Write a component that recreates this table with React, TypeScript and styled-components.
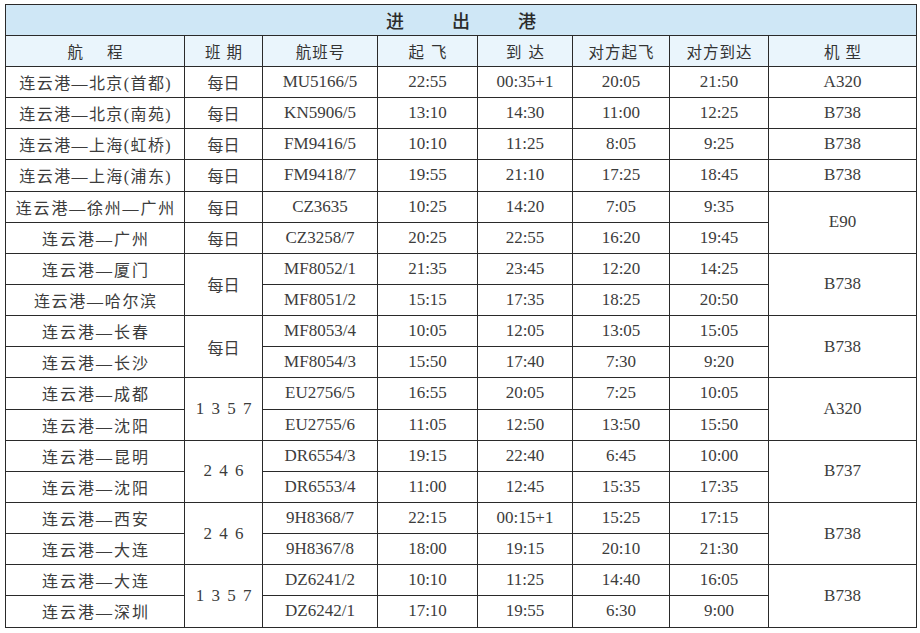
import React from 'react'
import styled, { createGlobalStyle } from 'styled-components'

const GlobalStyle = createGlobalStyle`
  html, body {
    margin: 0;
    padding: 0;
    background: #ffffff;
  }
  body {
    font-family: "Liberation Serif", "Noto Sans CJK SC", serif;
    color: #333;
  }
`

const Page = styled.div`
  width: 920px;
  height: 633px;
  padding: 4px 0 0 5px;
  box-sizing: border-box;
`

const Table = styled.table`
  border-collapse: collapse;
  table-layout: fixed;
  width: 911px;
  border: 1px solid #2a2a2a;
`

const TitleCell = styled.th`
  height: 30px;
  padding: 0;
  background: #cfe7f6;
  border: 1px solid #2a2a2a;
  font-family: "Noto Sans CJK SC", sans-serif;
  font-size: 18px;
  font-weight: 500;
  color: #2b2b2b;
  text-align: center;

  span {
    margin: 0 24px;
  }
`

const HeadCell = styled.th<{ $spacing?: number }>`
  height: 30px;
  padding: 0;
  background: #eaf5fc;
  border: 1px solid #2a2a2a;
  font-family: "Noto Sans CJK SC", sans-serif;
  font-size: 15.5px;
  font-weight: 400;
  color: #333;
  text-align: center;
  letter-spacing: ${(p) => p.$spacing ?? 0}px;
  text-indent: ${(p) => p.$spacing ?? 0}px;
`

const Row = styled.tr`
  height: 31.15px;
`

const Cell = styled.td<{ $cjk?: boolean; $spacing?: number }>`
  padding: 0;
  border: 1px solid #2a2a2a;
  text-align: center;
  vertical-align: middle;
  white-space: nowrap;
  color: #3c3c3c;
  font-family: "Liberation Serif", "Noto Sans CJK SC", serif;
  font-size: ${(p) => (p.$cjk ? '16px' : '17px')};
  letter-spacing: ${(p) => p.$spacing ?? 0}px;
  text-indent: ${(p) => p.$spacing ?? 0}px;
`

const widths = [179, 78, 115, 100, 95, 97, 99, 148]

type Flight = {
  route: string
  code: string
  dep: string
  arr: string
  backDep: string
  backArr: string
}

// 连续两行共用机型；前五行班期各自独立
const groups: { plane: string; rows: { days?: string; daysSpan?: number; f: Flight }[] }[] = [
  { plane: 'A320', rows: [{ days: '每日', f: { route: '连云港—北京(首都)', code: 'MU5166/5', dep: '22:55', arr: '00:35+1', backDep: '20:05', backArr: '21:50' } }] },
  { plane: 'B738', rows: [{ days: '每日', f: { route: '连云港—北京(南苑)', code: 'KN5906/5', dep: '13:10', arr: '14:30', backDep: '11:00', backArr: '12:25' } }] },
  { plane: 'B738', rows: [{ days: '每日', f: { route: '连云港—上海(虹桥)', code: 'FM9416/5', dep: '10:10', arr: '11:25', backDep: '8:05', backArr: '9:25' } }] },
  { plane: 'B738', rows: [{ days: '每日', f: { route: '连云港—上海(浦东)', code: 'FM9418/7', dep: '19:55', arr: '21:10', backDep: '17:25', backArr: '18:45' } }] },
  {
    plane: 'E90',
    rows: [
      { days: '每日', f: { route: '连云港—徐州—广州', code: 'CZ3635', dep: '10:25', arr: '14:20', backDep: '7:05', backArr: '9:35' } },
      { days: '每日', f: { route: '连云港—广州', code: 'CZ3258/7', dep: '20:25', arr: '22:55', backDep: '16:20', backArr: '19:45' } },
    ],
  },
  {
    plane: 'B738',
    rows: [
      { days: '每日', daysSpan: 2, f: { route: '连云港—厦门', code: 'MF8052/1', dep: '21:35', arr: '23:45', backDep: '12:20', backArr: '14:25' } },
      { f: { route: '连云港—哈尔滨', code: 'MF8051/2', dep: '15:15', arr: '17:35', backDep: '18:25', backArr: '20:50' } },
    ],
  },
  {
    plane: 'B738',
    rows: [
      { days: '每日', daysSpan: 2, f: { route: '连云港—长春', code: 'MF8053/4', dep: '10:05', arr: '12:05', backDep: '13:05', backArr: '15:05' } },
      { f: { route: '连云港—长沙', code: 'MF8054/3', dep: '15:50', arr: '17:40', backDep: '7:30', backArr: '9:20' } },
    ],
  },
  {
    plane: 'A320',
    rows: [
      { days: '1 3 5 7', daysSpan: 2, f: { route: '连云港—成都', code: 'EU2756/5', dep: '16:55', arr: '20:05', backDep: '7:25', backArr: '10:05' } },
      { f: { route: '连云港—沈阳', code: 'EU2755/6', dep: '11:05', arr: '12:50', backDep: '13:50', backArr: '15:50' } },
    ],
  },
  {
    plane: 'B737',
    rows: [
      { days: '2 4 6', daysSpan: 2, f: { route: '连云港—昆明', code: 'DR6554/3', dep: '19:15', arr: '22:40', backDep: '6:45', backArr: '10:00' } },
      { f: { route: '连云港—沈阳', code: 'DR6553/4', dep: '11:00', arr: '12:45', backDep: '15:35', backArr: '17:35' } },
    ],
  },
  {
    plane: 'B738',
    rows: [
      { days: '2 4 6', daysSpan: 2, f: { route: '连云港—西安', code: '9H8368/7', dep: '22:15', arr: '00:15+1', backDep: '15:25', backArr: '17:15' } },
      { f: { route: '连云港—大连', code: '9H8367/8', dep: '18:00', arr: '19:15', backDep: '20:10', backArr: '21:30' } },
    ],
  },
  {
    plane: 'B738',
    rows: [
      { days: '1 3 5 7', daysSpan: 2, f: { route: '连云港—大连', code: 'DZ6241/2', dep: '10:10', arr: '11:25', backDep: '14:40', backArr: '16:05' } },
      { f: { route: '连云港—深圳', code: 'DZ6242/1', dep: '17:10', arr: '19:55', backDep: '6:30', backArr: '9:00' } },
    ],
  },
]

const routeSpacing = (route: string) => {
  if (route.length <= 6) return 2
  if (route.length === 7) return 1.7
  if (route.length === 9) return 1.8
  return 1.4
}

const App = () => {
  return (
    <Page>
      <GlobalStyle />
      <Table>
        <colgroup>
          {widths.map((w, i) => (
            <col key={i} style={{ width: w }} />
          ))}
        </colgroup>
        <thead>
          <tr>
            <TitleCell colSpan={8}>
              <span>进</span>
              <span>出</span>
              <span>港</span>
            </TitleCell>
          </tr>
          <tr>
            <HeadCell $spacing={24}>航程</HeadCell>
            <HeadCell $spacing={6}>班期</HeadCell>
            <HeadCell $spacing={1}>航班号</HeadCell>
            <HeadCell $spacing={7}>起飞</HeadCell>
            <HeadCell $spacing={7}>到达</HeadCell>
            <HeadCell $spacing={1}>对方起飞</HeadCell>
            <HeadCell $spacing={1}>对方到达</HeadCell>
            <HeadCell $spacing={6}>机型</HeadCell>
          </tr>
        </thead>
        <tbody>
          {groups.map((g, gi) =>
            g.rows.map((r, ri) => (
              <Row key={`${gi}-${ri}`}>
                <Cell $cjk $spacing={routeSpacing(r.f.route)}>
                  {r.f.route}
                </Cell>
                {r.days !== undefined && (
                  <Cell
                    rowSpan={r.daysSpan ?? 1}
                    $cjk={r.days === '每日'}
                    $spacing={r.days === '每日' ? 0 : 1.5}
                  >
                    {r.days}
                  </Cell>
                )}
                <Cell>{r.f.code}</Cell>
                <Cell>{r.f.dep}</Cell>
                <Cell>{r.f.arr}</Cell>
                <Cell>{r.f.backDep}</Cell>
                <Cell>{r.f.backArr}</Cell>
                {ri === 0 && <Cell rowSpan={g.rows.length}>{g.plane}</Cell>}
              </Row>
            ))
          )}
        </tbody>
      </Table>
    </Page>
  )
}

export default App
